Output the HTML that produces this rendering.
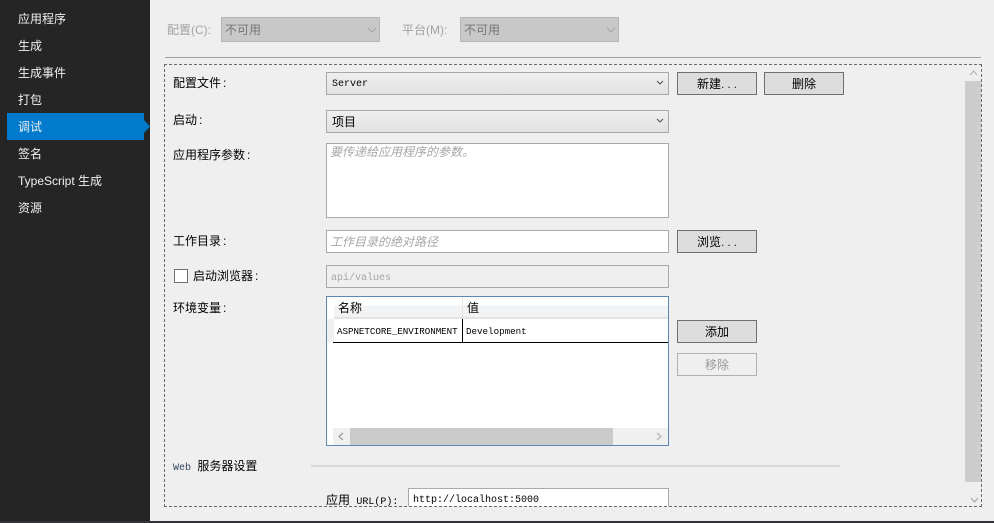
<!DOCTYPE html>
<html><head><meta charset="utf-8"><style>
html,body{margin:0;padding:0;width:994px;height:523px;overflow:hidden;background:#efefef}
body{position:relative;font-family:"Liberation Sans","Noto Sans CJK SC",sans-serif;font-size:12px;color:#000}
.a{position:absolute;box-sizing:border-box;white-space:nowrap}
.s{font-family:"Liberation Sans","WenQuanYi Zen Hei","Noto Sans CJK SC",sans-serif;font-size:12px;line-height:16px}
.m{font-family:"Liberation Mono","Noto Sans CJK SC",monospace;font-size:10px;line-height:14px}
.n{color:#f1f1f1;left:18px;font-size:12px;line-height:16px}
.box{border:1px solid #a9a9a9;background:#fff}
.sel{border:1px solid #a9a9a9;background:linear-gradient(#efefef,#e2e2e2)}
.btn{border:1px solid #6f6f6f;background:#dddddd;text-align:center;line-height:23px;font-family:"Liberation Sans","WenQuanYi Zen Hei","Noto Sans CJK SC",sans-serif;font-size:12px}
.d{letter-spacing:3px;margin-right:-3px;color:#222}
.c{margin-left:2px}
.ph{color:#a6a6a6;font-style:italic;font-size:12px;line-height:16px;font-family:"Liberation Sans","WenQuanYi Zen Hei","Noto Sans CJK SC",sans-serif}
svg{position:absolute;overflow:visible}
</style></head><body>
<div class="a" style="left:0;top:0;width:150px;height:523px;background:#252526"></div>
<div class="a" style="left:7px;top:113px;width:137px;height:27px;background:#007acc"></div>
<svg style="left:144px;top:120px" width="6" height="13"><path d="M0 0L6 6.500L0 13Z" fill="#007acc"/></svg>
<div class="a n" style="top:11px">应用程序</div>
<div class="a n" style="top:38px">生成</div>
<div class="a n" style="top:65px">生成事件</div>
<div class="a n" style="top:92px">打包</div>
<div class="a n" style="top:119px">调试</div>
<div class="a n" style="top:146px">签名</div>
<div class="a n" style="top:173px">TypeScript 生成</div>
<div class="a n" style="top:200px">资源</div>
<div class="a" style="left:0;top:521px;width:994px;height:2px;background:#333337"></div>

<div class="a" style="left:167px;top:22px;color:#a2a2a2;line-height:16px">配置(C):</div>
<div class="a" style="left:221px;top:17px;width:159px;height:25px;background:#c8c8c8;border:1px solid #b5b5b5"></div>
<div class="a" style="left:225px;top:22px;color:#767676;line-height:16px">不可用</div>
<svg style="left:367px;top:27px" width="10" height="6"><path d="M1 1L5 5L9 1" fill="none" stroke="#a4a4a4"/></svg>
<div class="a" style="left:402px;top:22px;color:#a2a2a2;line-height:16px">平台(M):</div>
<div class="a" style="left:460px;top:17px;width:159px;height:25px;background:#c8c8c8;border:1px solid #b5b5b5"></div>
<div class="a" style="left:464px;top:22px;color:#767676;line-height:16px">不可用</div>
<svg style="left:606px;top:27px" width="10" height="6"><path d="M1 1L5 5L9 1" fill="none" stroke="#a4a4a4"/></svg>
<div class="a" style="left:165px;top:57px;width:816px;height:1px;background:#a0a0a0"></div>

<div class="a" style="left:965px;top:81px;width:16px;height:401px;background:#cdcdcd"></div>
<svg style="left:969px;top:70px" width="9" height="6"><path d="M1 5L4.500 1L8 5" fill="none" stroke="#b4b4b4" stroke-width="1.200"/></svg>
<svg style="left:970px;top:497px" width="9" height="6"><path d="M1 1L4.500 5L8 1" fill="none" stroke="#a8a8a8" stroke-width="1.200"/></svg>

<div class="a s" style="left:173px;top:75px">配置文件<span class="c">:</span></div>
<div class="a sel" style="left:326px;top:72px;width:343px;height:23px"></div>
<div class="a m" style="left:332px;top:78px">Server</div>
<svg style="left:656px;top:80px" width="8" height="5"><path d="M1 1L4 4L7 1" fill="none" stroke="#555" stroke-width="1.100"/></svg>
<div class="a btn" style="left:677px;top:72px;width:80px;height:23px">新建<span class="d">...</span></div>
<div class="a btn" style="left:764px;top:72px;width:80px;height:23px">删除</div>

<div class="a s" style="left:173px;top:112px">启动<span class="c">:</span></div>
<div class="a sel" style="left:326px;top:110px;width:343px;height:23px"></div>
<div class="a s" style="left:332px;top:114px">项目</div>
<svg style="left:656px;top:118px" width="8" height="5"><path d="M1 1L4 4L7 1" fill="none" stroke="#555" stroke-width="1.100"/></svg>

<div class="a s" style="left:173px;top:147px">应用程序参数<span class="c">:</span></div>
<div class="a box" style="left:326px;top:143px;width:343px;height:75px"></div>
<div class="a ph" style="left:330px;top:144px">要传递给应用程序的参数。</div>

<div class="a s" style="left:173px;top:233px">工作目录<span class="c">:</span></div>
<div class="a box" style="left:326px;top:230px;width:343px;height:23px"></div>
<div class="a ph" style="left:330px;top:234px">工作目录的绝对路径</div>
<div class="a btn" style="left:677px;top:230px;width:80px;height:23px">浏览<span class="d">...</span></div>

<div class="a" style="left:174px;top:269px;width:14px;height:14px;background:#fff;border:1px solid #6f6f6f"></div>
<div class="a s" style="left:193px;top:268px">启动浏览器<span class="c">:</span></div>
<div class="a" style="left:326px;top:265px;width:343px;height:23px;border:1px solid #a9a9a9;background:#efefef"></div>
<div class="a m" style="left:331px;top:272px;color:#a6a6a6">api/values</div>

<div class="a s" style="left:173px;top:300px">环境变量<span class="c">:</span></div>
<div class="a" style="left:326px;top:296px;width:343px;height:150px;border:1px solid #5f87b3;background:#fff"></div>
<div class="a" style="left:334px;top:297px;width:334px;height:22px;background:linear-gradient(#fff 0,#fff 40%,#f2f3f5 45%,#f2f3f5 100%);border-bottom:2px solid #e3e3e3"></div>
<div class="a" style="left:462px;top:297px;width:1px;height:22px;background:#e6e6e6"></div>
<div class="a s" style="left:338px;top:300px">名称</div>
<div class="a s" style="left:467px;top:300px">值</div>
<div class="a" style="left:327px;top:319px;width:7px;height:23px;background:#f0f0f0"></div>
<div class="a" style="left:333px;top:342px;width:335px;height:1px;background:#000"></div>
<div class="a" style="left:462px;top:319px;width:1px;height:23px;background:#000"></div>
<div class="a m" style="left:337px;top:325px;font-size:9.200px;letter-spacing:-.03px">ASPNETCORE_ENVIRONMENT</div>
<div class="a m" style="left:466px;top:325px;font-size:9.200px">Development</div>
<div class="a" style="left:333px;top:428px;width:335px;height:17px;background:#f0f0f0"></div>
<div class="a" style="left:350px;top:428px;width:263px;height:17px;background:#cbcbcb"></div>
<svg style="left:338px;top:432px" width="6" height="9"><path d="M5 1L1 4.500L5 8" fill="none" stroke="#9a9a9a" stroke-width="1.200"/></svg>
<svg style="left:656px;top:432px" width="6" height="9"><path d="M1 1L5 4.500L1 8" fill="none" stroke="#b4b4b4" stroke-width="1.200"/></svg>

<div class="a btn" style="left:677px;top:320px;width:80px;height:23px">添加</div>
<div class="a btn" style="left:677px;top:353px;width:80px;height:23px;border-color:#adb2b5;background:#efefef;color:#9a9a9a">移除</div>

<div class="a s" style="left:173px;top:458px"><span class="m" style="color:#33465f">Web</span> <span style="margin-left:3px">服务器设置</span></div>
<div class="a" style="left:311px;top:465px;width:529px;height:2px;background:#d8d8d8"></div>

<div class="a" style="left:408px;top:488px;width:261px;height:18px;border:1px solid #a9a9a9;border-bottom:0;background:#fff"></div>
<div class="a s" style="left:326px;top:492px">应用 <span class="m" style="margin-left:3px">URL(P):</span></div>
<div class="a m" style="left:413px;top:494px;font-size:10px">http://localhost:5000</div>

<div class="a" style="left:164px;top:64px;width:818px;height:443px;border:1px dashed #696969"></div>
</body></html>
